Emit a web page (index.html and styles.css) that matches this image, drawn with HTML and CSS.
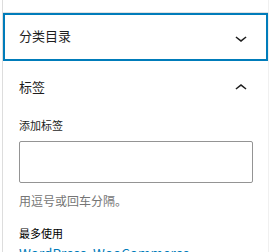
FILE: index.html
```html
<!DOCTYPE html>
<html lang="zh-CN">
<head>
    <meta charset="UTF-8">
    <meta name="viewport" content="width=device-width, initial-scale=1.0">
    <title>标签</title>
    <link rel="stylesheet" href="styles.css">
</head>
<body>
    <div class="sidebar">
        <div class="panel panel-first">
            <button class="panel-toggle is-focused">
                <span>分类目录</span>
                <svg class="chevron" viewBox="0 0 24 24" width="24" height="24"><path d="M17.5 11.6L12 16l-5.5-4.4.9-1.2L12 14l4.6-3.6 1 1.2z"/></svg>
            </button>
        </div>
        <div class="panel panel-open">
            <button class="panel-toggle">
                <span>标签</span>
                <svg class="chevron" viewBox="0 0 24 24" width="24" height="24"><path d="M6.5 12.4L12 8l5.5 4.4-.9 1.2L12 10l-4.6 3.6-1-1.2z"/></svg>
            </button>
            <div class="panel-content">
                <label class="tag-label" for="tags">添加标签</label>
                <input class="tag-input" id="tags" type="text">
                <p class="help">用逗号或回车分隔。</p>
                <h4 class="most-used">最多使用</h4>
                <div class="tag-links"><a href="#">WordPress</a>, <a href="#">WooCommerce</a></div>
            </div>
        </div>
    </div>
</body>
</html>
```

FILE: styles.css
```css
body {
    margin: 0;
    font-family: "Noto Sans CJK SC", "Noto Sans", sans-serif;
    color: #1e1e1e;
    background: #fff;
}
.sidebar {
    margin-left: 2px;
    width: 265px;
    min-height: 252px;
    padding-top: 12px;
    border-left: 1px solid #ddd;
    border-right: 1px solid #f0f0f0;
    box-sizing: content-box;
}
.panel {
    border-top: 1px solid #e0e0e0;
}
.panel-first {
    margin-bottom: 2px;
}
.panel-open {
    border-top: none;
}
.panel-toggle {
    display: flex;
    align-items: center;
    justify-content: space-between;
    width: 100%;
    height: 48px;
    padding: 0 15px 0 16px;
    border: none;
    background: #fff;
    font-family: inherit;
    font-size: 13px;
    color: #1e1e1e;
    text-align: left;
    box-sizing: border-box;
}
.panel-toggle span {
    margin-top: -2px;
}
.panel-first .panel-toggle span {
    margin-top: -4px;
}
.panel-toggle .chevron {
    fill: #1e1e1e;
    margin-top: 2px;
}
.is-focused {
    box-shadow: inset 0 0 0 2px #007cba;
}
.panel-content {
    padding: 6px 15px 0 16px;
}
.tag-label {
    display: block;
    font-size: 11px;
    line-height: 16px;
}
.tag-input {
    display: block;
    width: 234px;
    height: 42px;
    margin-top: 8px;
    border: 1px solid #949494;
    border-radius: 2px;
    box-sizing: border-box;
}
.help {
    margin: 10px 0 0;
    font-size: 12px;
    line-height: 16px;
    color: #757575;
}
.most-used {
    margin: 16px 0 0;
    font-size: 11px;
    line-height: 16px;
    font-weight: normal;
    color: #000;
}
.tag-links {
    margin-top: 2px;
    font-size: 13.5px;
    line-height: 20px;
    color: #007cba;
}
.tag-links a {
    color: #007cba;
    text-decoration: none;
}
```
